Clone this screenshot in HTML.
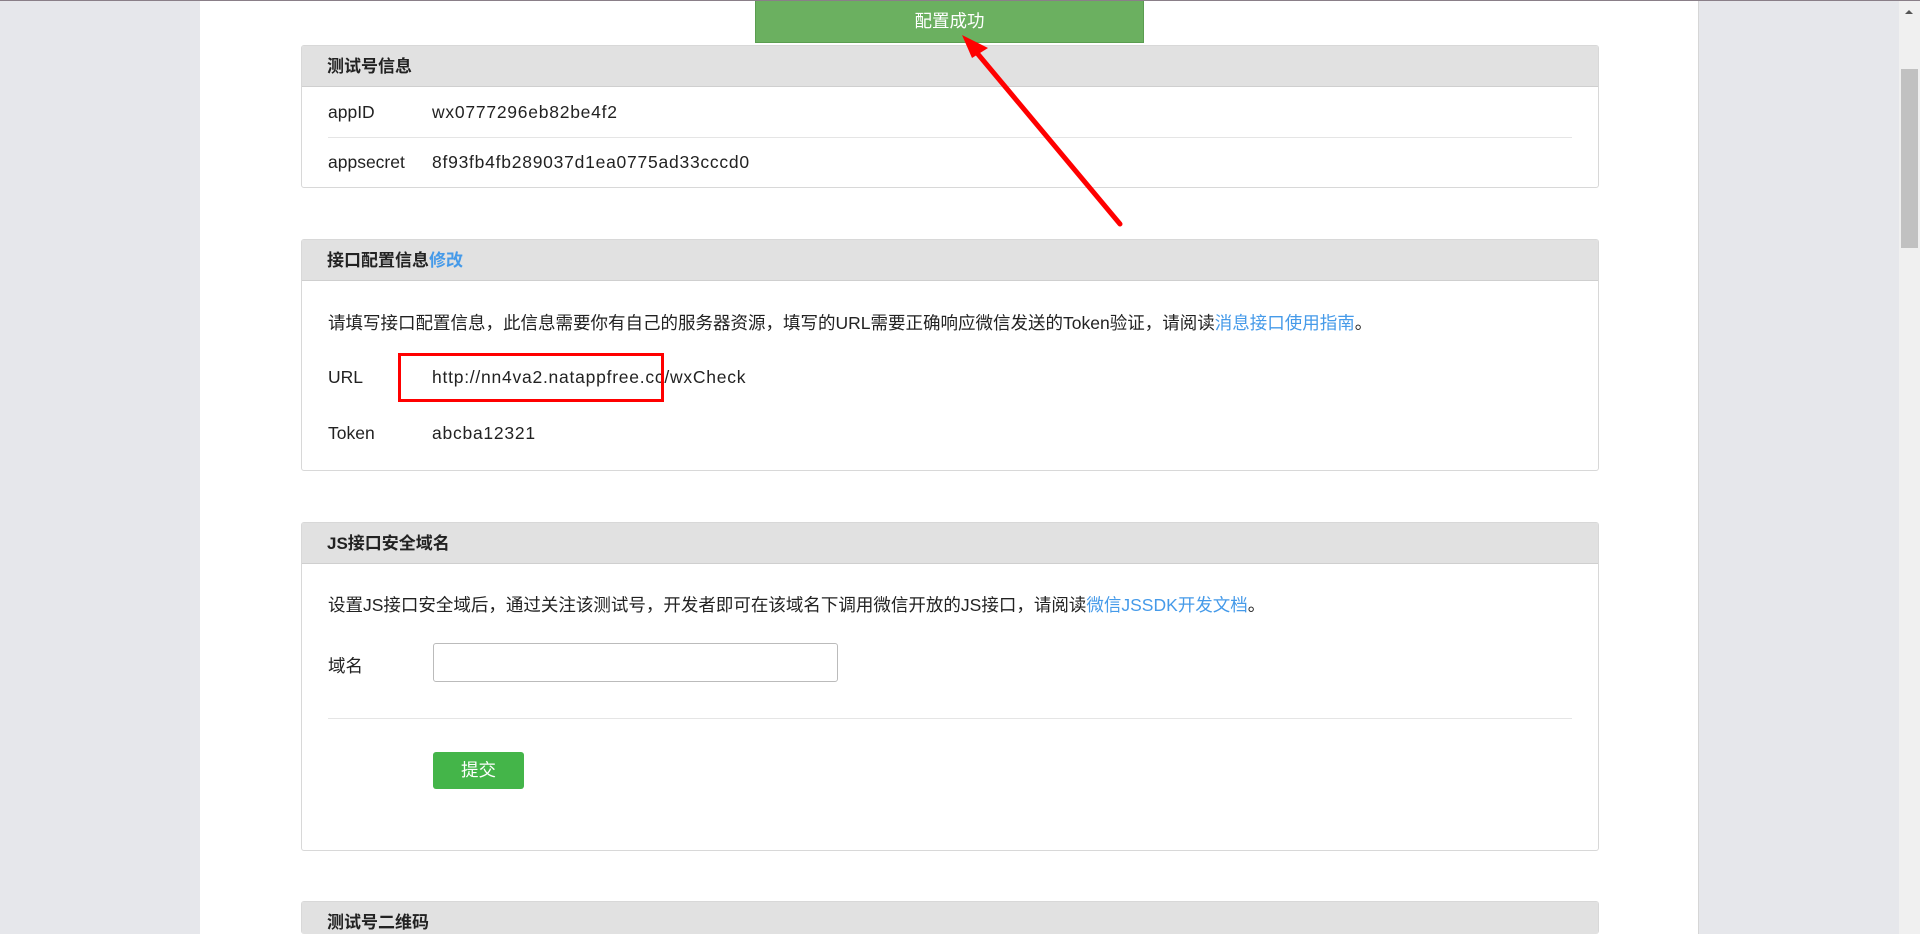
<!DOCTYPE html>
<html><head><meta charset="utf-8"><style>
*{box-sizing:border-box;margin:0;padding:0}
html,body{width:1920px;height:934px;overflow:hidden}
body{background:#e6e7eb;font-family:"Liberation Sans","Noto Sans CJK SC",sans-serif;color:#222;position:relative}
.main{position:absolute;left:200px;top:0;width:1499px;height:934px;background:#fff;border-right:1px solid #d6d6d6}
.topline{position:absolute;left:0;top:0;width:1920px;height:1px;background:#8a7f88;z-index:5}
.panel{position:absolute;left:301px;width:1298px;border:1px solid #d8d8d8;border-radius:3px;background:#fff;overflow:hidden}
.hd{height:41px;background:#e1e1e1;border-bottom:1px solid #cfcfcf;font-weight:bold;font-size:17px;line-height:41px;padding-left:25px}
.t{position:absolute;font-size:17.5px;white-space:nowrap}
.lbl{left:26px}.val{left:130px;letter-spacing:0.75px}
a{color:#459ae9;text-decoration:none}
.scroll{position:absolute;left:1899px;top:0;width:21px;height:934px;background:#f0f0f0}
</style></head><body>
<div class="main"></div>
<div class="topline"></div>
<div style="position:absolute;left:755px;top:0;width:389px;height:43px;background:#6bb060;border:1px solid #5a9d50;border-top:none;color:#fff;font-size:17.5px;text-align:center;line-height:42px">配置成功</div>

<div class="panel" style="top:45px;height:143px">
<div class="hd">测试号信息</div>
<div class="t lbl" style="top:56px">appID</div><div class="t val" style="top:56px">wx0777296eb82be4f2</div>
<div style="position:absolute;left:26px;right:26px;top:91px;height:1px;background:#e5e5e5"></div>
<div class="t lbl" style="top:106px">appsecret</div><div class="t val" style="top:106px">8f93fb4fb289037d1ea0775ad33cccd0</div>
</div>

<div class="panel" style="top:239px;height:232px">
<div class="hd">接口配置信息<a>修改</a></div>
<div class="t lbl" style="top:70px">请填写接口配置信息，此信息需要你有自己的服务器资源，填写的URL需要正确响应微信发送的Token验证，请阅读<a>消息接口使用指南</a>。</div>
<div class="t lbl" style="top:127px">URL</div><div class="t val" style="top:127px">http://nn4va2.natappfree.cc/wxCheck</div>
<div class="t lbl" style="top:183px">Token</div><div class="t val" style="top:183px">abcba12321</div>
</div>
<div style="position:absolute;left:398px;top:353px;width:266px;height:49px;border:3px solid #f00"></div>

<div class="panel" style="top:522px;height:329px">
<div class="hd">JS接口安全域名</div>
<div class="t lbl" style="top:69px">设置JS接口安全域后，通过关注该测试号，开发者即可在该域名下调用微信开放的JS接口，请阅读<a>微信JSSDK开发文档</a>。</div>
<div class="t lbl" style="top:130px">域名</div>
<div style="position:absolute;left:131px;top:120px;width:405px;height:39px;border:1px solid #bbb;border-radius:3px"></div>
<div style="position:absolute;left:26px;right:26px;top:195px;height:1px;background:#e5e5e5"></div>
<div style="position:absolute;left:131px;top:229px;width:91px;height:37px;background:#44b549;border-radius:3px;color:#fff;font-size:17.5px;text-align:center;line-height:37px">提交</div>
</div>

<div class="panel" style="top:901px;height:33px;border-bottom:none">
<div class="hd">测试号二维码</div>
</div>

<svg style="position:absolute;left:0;top:0" width="1920" height="934">
<line x1="1120" y1="224" x2="972" y2="47" stroke="#f00" stroke-width="5" stroke-linecap="round"/>
<polygon points="962,35 988,48 972,58" fill="#f00"/>
</svg>

<div class="scroll">
<div style="position:absolute;left:6px;top:10px;width:0;height:0;border-left:4px solid transparent;border-right:4px solid transparent;border-bottom:4px solid #555"></div>
<div style="position:absolute;left:2px;top:69px;width:17px;height:179px;background:#c1c1c1"></div>
</div>
</body></html>
